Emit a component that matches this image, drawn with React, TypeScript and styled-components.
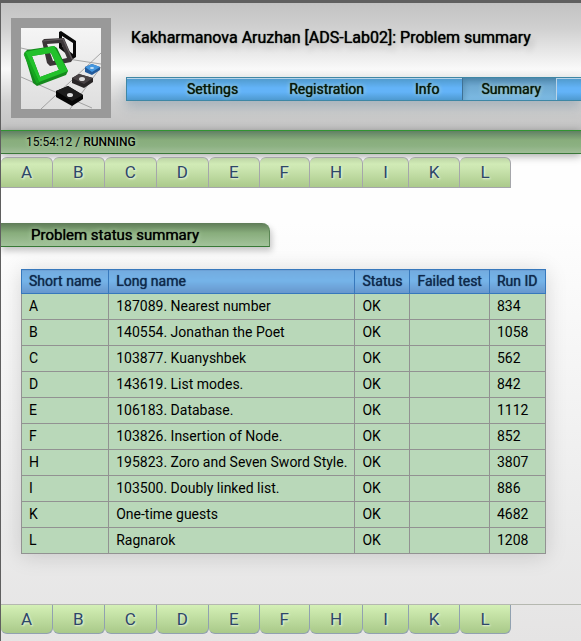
import React from "react";
import styled, { createGlobalStyle } from "styled-components";

const Global = createGlobalStyle`
  * { box-sizing: border-box; }
  html { min-height: 100%; background: #e5e4e4; }
  body { margin: 0; font-family: Roboto, "Liberation Sans", sans-serif; color: #000; overflow-x: hidden; }
`;

const Page = styled.div`
  min-height: 100vh;
  overflow: hidden;
  border-top: 3px solid #5f5f5f;
  border-left: 1px solid #5f5f5f;
  background: linear-gradient(#fefefe 0, #fefefe 220px, #ebebeb 520px, #e5e4e4 100%);
`;

const Header = styled.header`
  display: flex;
  height: 127px;
  padding: 15px 0 0 10px;
  gap: 15px;
  background: linear-gradient(#c2c2c2 0%, #d0d0d0 20%, #f9f9f9 52%, #d1d1d1 78%, #c3c3c3 100%);
`;

const Logo = styled.svg`
  flex: none;
  width: 100px;
  height: 100px;
`;

const Heading = styled.div`
  flex: 1;
  min-width: 0;
`;

const Title = styled.h1`
  margin: 10px 0 30px 5px;
  font-size: 16px;
  line-height: 19px;
  font-weight: 400;
  white-space: nowrap;
  text-shadow: 0 0 1px #000, 3px 5px 6px rgba(0, 0, 0, 0.2);
`;

const Nav = styled.nav`
  display: flex;
  height: 24px;
  padding-left: 41px;
  border: 1px solid #3f87a5;
  border-right: 0;
  background: linear-gradient(#b9d4e8 0, #b9d4e8 1px, #519ccf 1px, #63b3f8 10px, #63b3f8 14px, #4e9ad0 100%);
  box-shadow: 0 6px 12px rgba(70, 105, 135, 0.3);
`;

const NavLink = styled.a<{ $active?: boolean }>`
  flex: none;
  margin-right: ${(p) => (p.$active ? 0 : 13)}px;
  padding: 0 ${(p) => (p.$active ? 15 : 18)}px 0 18px;
  border-left: 1px solid ${(p) => (p.$active ? "#3f7195" : "transparent")};
  border-right: 1px solid ${(p) => (p.$active ? "#b9d4e8" : "transparent")};
  background: ${(p) => (p.$active ? "linear-gradient(#5791b7, #70abd3 9px, #7dbbe4)" : "none")};
  box-shadow: ${(p) => (p.$active ? "inset 2px 2px 5px rgba(40,90,120,.25)" : "none")};
  color: #071707;
  font-size: 14px;
  line-height: 22px;
  font-weight: 400;
  text-decoration: none;
  text-shadow: 0 0 1px #071707, 0 0 4px #d5ecd5;
  &:nth-child(3) { margin-right: 4px; }
`;

const StatusBar = styled.div`
  height: 24px;
  padding-left: 25px;
  border-top: 1px solid #319431;
  border-bottom: 1px solid #3a7839;
  background: linear-gradient(#618064, #88ad7c 9px, #8cb182 15px, #a0bd98);
  box-shadow: 0 2px 9px rgba(0, 0, 0, 0.35);
  font-size: 12px;
  line-height: 22px;
  text-shadow: 0 0 4px #c9e5c1;
  b { font-weight: 500; }
`;

const Tabs = styled.nav<{ $bottom?: boolean }>`
  position: relative;
  display: flex;
  margin-top: ${(p) => (p.$bottom ? 50 : 3)}px;
  border-top: ${(p) => (p.$bottom ? "1px solid #b5b8b0" : "0")};
`;

const Tab = styled.a<{ $bottom?: boolean }>`
  flex: none;
  height: ${(p) => (p.$bottom ? 29 : 31)}px;
  padding: 0 20px;
  border: 1px solid ${(p) => (p.$bottom ? "#91a1b0" : "#a5a6aa")};
  border-left: 0;
  ${(p) => (p.$bottom ? "border-top: 0;" : "")}
  border-radius: ${(p) => (p.$bottom ? "0 0 6px 6px" : "6px 6px 0 0")};
  background: ${(p) => (p.$bottom ? "linear-gradient(#d4f0b6, #a9c989)" : "linear-gradient(#bdd5a6, #d1ebb6 6px, #cce6b1 10px, #abca8b)")};
  color: #2d4668;
  font-size: 17px;
  line-height: ${(p) => (p.$bottom ? 28 : 29)}px;
  text-decoration: none;
  text-shadow: 1px 1px 2px #eef7e5;
`;

const SectionTitle = styled.h2`
  width: 270px;
  height: 24px;
  margin: 35px 0 22px -1px;
  padding-left: 31px;
  border-bottom: 1px solid #387a37;
  border-right: 1px solid #5b8655;
  border-radius: 0 8px 0 0;
  background: linear-gradient(#5e7b57, #88ad7c 10px, #a3c39b);
  box-shadow: 2px 4px 6px rgba(0, 0, 0, 0.22);
  font-size: 15px;
  line-height: 24px;
  font-weight: 400;
  text-shadow: 0 0 1px #000, 0 0 5px #c9e5c1;
`;

const Table = styled.table`
  margin-left: 20px;
  border-collapse: collapse;
  background: #b9d8b9;
  box-shadow: 0 2px 20px rgba(0, 0, 0, 0.15);
  font-size: 14px;
  line-height: 15px;
  th, td { padding: 5px 7px; text-align: left; white-space: nowrap; }
  td { height: 26px; border: 1px solid #929292; }
  th {
    height: 24px;
    padding: 4px 7px;
    border: 1px solid #3778bc;
    background: linear-gradient(#73abdf, #75b4e9 10px, #6796cc);
    color: #10294b;
    font-weight: 400;
    text-shadow: 0 0 1px #10294b;
  }
`;

const rows = [
  ["A", "187089. Nearest number", "834"],
  ["B", "140554. Jonathan the Poet", "1058"],
  ["C", "103877. Kuanyshbek", "562"],
  ["D", "143619. List modes.", "842"],
  ["E", "106183. Database.", "1112"],
  ["F", "103826. Insertion of Node.", "852"],
  ["H", "195823. Zoro and Seven Sword Style.", "3807"],
  ["I", "103500. Doubly linked list.", "886"],
  ["K", "One-time guests", "4682"],
  ["L", "Ragnarok", "1208"],
];

function ProblemTabs({ bottom = false }: { bottom?: boolean }) {
  return (
    <Tabs $bottom={bottom} aria-label={bottom ? "Problems, bottom" : "Problems"}>
      {rows.map(([id]) => (
        <Tab key={id} href={`#${id}`} $bottom={bottom}>{id}</Tab>
      ))}
    </Tabs>
  );
}

function LogoMark() {
  return (
    <Logo viewBox="0 0 100 100" aria-hidden="true">
      <defs>
        <linearGradient id="floor" x1="0" y1="0" x2="0" y2="1">
          <stop offset="0" stopColor="#f5f5f5" />
          <stop offset="1" stopColor="#dedede" />
        </linearGradient>
      </defs>
      <path fill="#999" d="M0 0h100v100H0z" />
      <path fill="url(#floor)" d="M10 10h80v81H10z" />
      <path d="M10 30l22 5M57 41l33 5M10 59l71 31M30 91l60-56M59 91l31-42" fill="none" stroke="#929292" strokeWidth="0.8" />
      <path fill="#080808" fillRule="evenodd" d="M48 14l2-1 15 10v16l-3 2-14-11zM51 18v10l11 8V25z" />
      <path fill="#3b3638" fillRule="evenodd" d="M31 23l2-2 20-1 9 21-2 3-21 4-3-3zM36 26l6 17 14-3-6-15z" />
      <path d="M32 23l20-2 9 20" fill="none" stroke="#625b5e" strokeWidth="1.2" />
      <path fill="#15891d" fillRule="evenodd" d="M13 35l3-3 27-4 3 2 11 23-2 4-29 11-4-3zM21 38l8 21 19-7-8-17z" />
      <path fill="#22c12b" fillRule="evenodd" d="M14 34l29-6 14 25-29 11zM21 38l8 21 19-7-8-17z" />
      <path d="M14 36l13 29" fill="none" stroke="#16a61f" strokeWidth="3" />
      <path fill="#225a9b" d="M74 49l7-3 8 3v3l-8 5-7-3z" />
      <path fill="#4497df" d="M74 49l7-3 8 3-8 5z" />
      <ellipse cx="81" cy="50" rx="2" ry="1" fill="#c9e2f3" />
      <path fill="#282526" d="M61 60l7-4 14 4v4l-9 6-12-5z" />
      <path fill="#484244" d="M61 60l7-4 14 4-9 6z" />
      <ellipse cx="71" cy="61" rx="3" ry="2" fill="#ddd" />
      <path fill="#050505" d="M45 73l12-5 15 9v4l-11 7-16-9z" />
      <path fill="#1d1d1d" d="M45 73l12-5 15 9-11 6z" />
      <ellipse cx="59" cy="77" rx="3" ry="2" fill="#ddd" />
    </Logo>
  );
}

export default function App() {
  return (
    <>
      <Global />
      <Page>
        <Header>
          <LogoMark />
          <Heading>
            <Title>Kakharmanova Aruzhan [ADS-Lab02]: Problem summary</Title>
            <Nav aria-label="Main">
              <NavLink href="#settings">Settings</NavLink>
              <NavLink href="#registration">Registration</NavLink>
              <NavLink href="#info">Info</NavLink>
              <NavLink href="#summary" $active aria-current="page">Summary</NavLink>
            </Nav>
          </Heading>
        </Header>
        <StatusBar>15:54:12 / <b>RUNNING</b></StatusBar>
        <ProblemTabs />
        <main>
          <SectionTitle>Problem status summary</SectionTitle>
          <Table>
            <thead>
              <tr>
                {["Short name", "Long name", "Status", "Failed test", "Run ID"].map((h) => (
                  <th key={h} scope="col">{h}</th>
                ))}
              </tr>
            </thead>
            <tbody>
              {rows.map(([id, name, run]) => (
                <tr key={id}>
                  <td>{id}</td>
                  <td>{name}</td>
                  <td>OK</td>
                  <td />
                  <td>{run}</td>
                </tr>
              ))}
            </tbody>
          </Table>
        </main>
        <ProblemTabs bottom />
      </Page>
    </>
  );
}
